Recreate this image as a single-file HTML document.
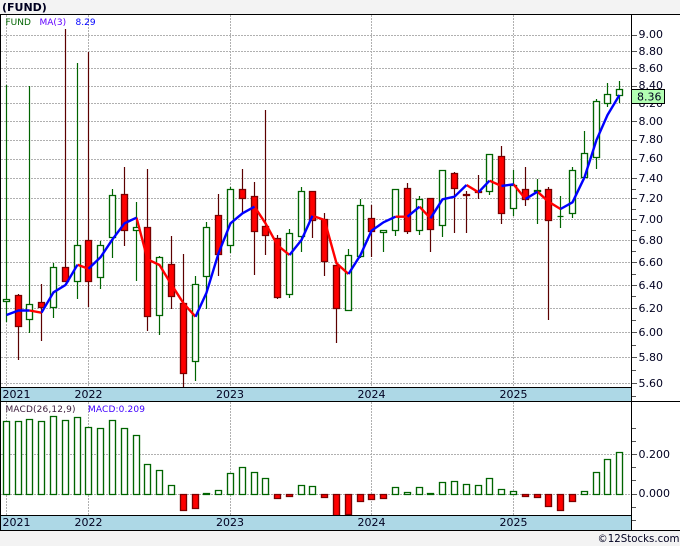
<!DOCTYPE html>
<html><head><meta charset="utf-8"><style>
html,body{margin:0;padding:0;background:#f3f3f3;width:680px;height:546px;overflow:hidden}
svg{display:block}
text{font-family:"DejaVu Sans",sans-serif;font-size:11px;fill:#000020}
.l{font-size:9px}
</style></head><body>
<svg width="680" height="546" viewBox="0 0 680 546" xmlns="http://www.w3.org/2000/svg">
<rect width="680" height="546" fill="#f3f3f3"/>
<rect x="0" y="14" width="680" height="516" fill="#fff"/>
<g shape-rendering="crispEdges">
<path fill="none" stroke="#b0b0b0" stroke-dasharray="2 1" d="M1 35.5H631M1 51.5H631M1 68.5H631M1 86.5H631M1 103.5H631M1 121.5H631M1 140.5H631M1 159.5H631M1 178.5H631M1 198.5H631M1 219.5H631M1 240.5H631M1 262.5H631M1 285.5H631M1 308.5H631M1 332.5H631M1 357.5H631M1 383.5H631M1 454.5H631M1 494.5H631M6.5 15V387M88.5 15V387M230.5 15V387M371.5 15V387M513.5 15V387M6.5 402V515M88.5 402V515M230.5 402V515M371.5 402V515M513.5 402V515"/>
</g>
<path fill="none" stroke="#006400" stroke-width="1.2" d="M6.5 85V322M29.5 86V333M53.5 263V318M77.5 63V299M100.5 241V289M112.5 189V258M136.5 202V281M159.5 256V335M195.5 276V381M206.5 222V309M230.5 187V253M289.5 229V298M301.5 187V252M348.5 249V311M360.5 199V258M383.5 230V252M395.5 189V236M419.5 196V235M442.5 170V237M489.5 154V195M513.5 170V216M537.5 179V224M560.5 196V228M572.5 167V218M584.5 131V177M596.5 99V169M607.5 83V107M619.5 81V103"/>
<path fill="none" stroke="#5c0000" stroke-width="1.2" d="M18.5 294V360M41.5 284V341M65.5 29V282M88.5 52V307M124.5 167V246M147.5 169V331M171.5 236V309M183.5 254V387M218.5 194V276M242.5 169V213M254.5 182V275M265.5 110V255M277.5 235V299M312.5 191V238M324.5 213V276M336.5 265V343M371.5 205V257M407.5 183V234M430.5 198V252M454.5 172V233M466.5 191V233M478.5 175V199M501.5 146V224M525.5 167V206M548.5 187V320"/>
<path fill="#fff" stroke="#006400" stroke-width="1.35" d="M3.5 299.5h6v2h-6zM26.5 304.5h6v15h-6zM50.5 267.5h6v40h-6zM74.5 245.5h6v36h-6zM97.5 245.5h6v32h-6zM109.5 195.5h6v42h-6zM133.5 227.5h6v3h-6zM156.5 257.5h6v58h-6zM192.5 284.5h6v77h-6zM203.5 227.5h6v49h-6zM227.5 189.5h6v56h-6zM286.5 233.5h6v61h-6zM298.5 191.5h6v45h-6zM345.5 255.5h6v55h-6zM357.5 205.5h6v51h-6zM380.5 230.5h6v2h-6zM392.5 189.5h6v41h-6zM416.5 199.5h6v31h-6zM439.5 170.5h6v55h-6zM486.5 154.5h6v37h-6zM510.5 185.5h6v23h-6zM534.5 190.5h6v1h-6zM557.5 216.5h6M569.5 170.5h6v43h-6zM581.5 153.5h6v24h-6zM593.5 101.5h6v56h-6zM604.5 94.5h6v9h-6zM616.5 89.5h6v6h-6z"/>
<path fill="#f00" stroke="#7a0000" stroke-width="1.35" d="M15.5 295.5h6v31h-6zM38.5 302.5h6v5h-6zM62.5 267.5h6v14h-6zM85.5 240.5h6v41h-6zM121.5 194.5h6v36h-6zM144.5 227.5h6v89h-6zM168.5 264.5h6v32h-6zM180.5 303.5h6v70h-6zM215.5 215.5h6v39h-6zM239.5 189.5h6v9h-6zM251.5 196.5h6v35h-6zM262.5 226.5h6v9h-6zM274.5 238.5h6v59h-6zM309.5 191.5h6v29h-6zM321.5 219.5h6v42h-6zM333.5 265.5h6v43h-6zM368.5 218.5h6v13h-6zM404.5 188.5h6v43h-6zM427.5 198.5h6v31h-6zM451.5 173.5h6v15h-6zM463.5 194.5h6v1h-6zM475.5 191.5h6v1h-6zM498.5 156.5h6v57h-6zM522.5 189.5h6v10h-6zM545.5 189.5h6v31h-6z"/>
<path fill="#fff" stroke="#006400" stroke-width="1.35" d="M3.5 421.5h6V494.5h-6zM15.5 421.5h6V494.5h-6zM26.5 419.5h6V494.5h-6zM38.5 421.5h6V494.5h-6zM50.5 416.5h6V494.5h-6zM62.5 420.5h6V494.5h-6zM74.5 417.5h6V494.5h-6zM85.5 427.5h6V494.5h-6zM97.5 428.5h6V494.5h-6zM109.5 420.5h6V494.5h-6zM121.5 428.5h6V494.5h-6zM133.5 435.5h6V494.5h-6zM144.5 464.5h6V494.5h-6zM156.5 470.5h6V494.5h-6zM168.5 485.5h6V494.5h-6zM203.5 493.5h6V494.5h-6zM215.5 490.5h6V494.5h-6zM227.5 473.5h6V494.5h-6zM239.5 467.5h6V494.5h-6zM251.5 472.5h6V494.5h-6zM262.5 478.5h6V494.5h-6zM298.5 485.5h6V494.5h-6zM309.5 486.5h6V494.5h-6zM392.5 487.5h6V494.5h-6zM404.5 492.5h6V494.5h-6zM416.5 487.5h6V494.5h-6zM427.5 493.5h6V494.5h-6zM439.5 482.5h6V494.5h-6zM451.5 481.5h6V494.5h-6zM463.5 484.5h6V494.5h-6zM475.5 485.5h6V494.5h-6zM486.5 478.5h6V494.5h-6zM498.5 489.5h6V494.5h-6zM510.5 491.5h6V494.5h-6zM581.5 491.5h6V494.5h-6zM593.5 472.5h6V494.5h-6zM604.5 459.5h6V494.5h-6zM616.5 452.5h6V494.5h-6z"/>
<path fill="#f00" stroke="#7a0000" stroke-width="1.35" d="M180.5 494.5h6V510.5h-6zM192.5 494.5h6V508.5h-6zM274.5 494.5h6V498.5h-6zM286.5 494.5h6V496.5h-6zM321.5 494.5h6V497.5h-6zM333.5 494.5h6V515.5h-6zM345.5 494.5h6V514.5h-6zM357.5 494.5h6V501.5h-6zM368.5 494.5h6V499.5h-6zM380.5 494.5h6V498.5h-6zM522.5 494.5h6V496.5h-6zM534.5 494.5h6V497.5h-6zM545.5 494.5h6V506.5h-6zM557.5 494.5h6V510.5h-6zM569.5 494.5h6V501.5h-6z"/>
<path fill="none" stroke="#f00" stroke-width="2.4" stroke-linejoin="round" d="M29.5 310.5L41.5 312.7M77.5 264.7L88.5 268.7M136.5 217.7L147.5 259.3L159.5 265L171.5 284.7L183.5 303.3L195.5 316.7M254.5 206.7L265.5 223.3L277.5 245.3L289.5 255M312.5 215.7L324.5 220L336.5 263.3L348.5 274M395.5 216.7L407.5 216.7M419.5 206.7L430.5 218.3M466.5 185L478.5 192.3M489.5 180.7L501.5 186M513.5 184.3L525.5 199M537.5 191.7L548.5 201.7L560.5 209"/>
<path fill="none" stroke="#00f" stroke-width="2.4" stroke-linejoin="round" d="M6.5 315L18.5 310.5L29.5 310.5M41.5 312.7L53.5 292.3L65.5 285L77.5 264.7M88.5 268.7L100.5 257.3L112.5 239.3L124.5 223.3L136.5 217.7M195.5 316.7L206.5 292.7L218.5 253.3L230.5 223.3L242.5 213.3L254.5 206.7M289.5 255L301.5 240L312.5 215.7M348.5 274L360.5 255L371.5 230.7L383.5 222.3L395.5 216.7M407.5 216.7L419.5 206.7M430.5 218.3L442.5 199.3L454.5 196.7L466.5 185M478.5 192.3L489.5 180.7M501.5 186L513.5 184.3M525.5 199L537.5 191.7M560.5 209L572.5 202.3L584.5 177.3L596.5 140L607.5 115L619.5 95"/>
<g shape-rendering="crispEdges">
<rect x="1" y="387" width="631" height="14" fill="#add8e6"/>
<rect x="1" y="515" width="631" height="15" fill="#add8e6"/>
<path fill="none" stroke="#000" d="M0 14.5H680M0 387.5H632M0 401.5H680M0 515.5H632M0 530.5H680M631.5 14V531M0.5 14V531"/>
<path fill="none" stroke="#555" d="M632 35.5h5M632 51.5h5M632 68.5h5M632 86.5h5M632 103.5h5M632 121.5h5M632 140.5h5M632 159.5h5M632 178.5h5M632 198.5h5M632 219.5h5M632 240.5h5M632 262.5h5M632 285.5h5M632 308.5h5M632 332.5h5M632 357.5h5M632 383.5h5M632 189.5h4M632 209.5h4M632 230.5h4M632 251.5h4M632 274.5h4M632 296.5h4M632 320.5h4M632 345.5h4M632 370.5h4M632 396.5h4M632 428.5h4M632 441.5h4M632 454.5h5M632 467.5h4M632 480.5h4M632 494.5h5M632 507.5h4M632 520.5h4"/>
</g>
<text x="2" y="11" style="font-weight:bold;font-size:11px;fill:#000020">(FUND)</text>
<text class="l" x="5.5" y="25" style="fill:#006400">FUND</text>
<text class="l" x="39.5" y="25" style="fill:#6000ff">MA(3)</text>
<text class="l" x="75.5" y="25" style="fill:#0000ff">8.29</text>
<text class="l" x="5.5" y="412" style="fill:#3a1a3a" textLength="70">MACD(26,12,9)</text>
<text class="l" x="88" y="412" style="fill:#4000ff" textLength="57">MACD:0.209</text>
<text x="638.5" y="38">9.00</text>
<text x="638.5" y="55">8.80</text>
<text x="638.5" y="72">8.60</text>
<text x="638.5" y="89">8.40</text>
<text x="638.5" y="107">8.20</text>
<text x="638.5" y="125">8.00</text>
<text x="638.5" y="143">7.80</text>
<text x="638.5" y="162">7.60</text>
<text x="638.5" y="182">7.40</text>
<text x="638.5" y="202">7.20</text>
<text x="638.5" y="223">7.00</text>
<text x="638.5" y="244">6.80</text>
<text x="638.5" y="266">6.60</text>
<text x="638.5" y="289">6.40</text>
<text x="638.5" y="312">6.20</text>
<text x="638.5" y="336">6.00</text>
<text x="638.5" y="361">5.80</text>
<text x="638.5" y="387">5.60</text>
<text x="638.5" y="458">0.200</text>
<text x="638.5" y="497">0.000</text>
<rect x="631.5" y="89.5" width="33" height="14" fill="#b3ffb3" stroke="#000" shape-rendering="crispEdges"/>
<text x="637" y="100.5">8.36</text>
<text x="2.5" y="398">2021</text>
<text x="74.5" y="398">2022</text>
<text x="216" y="398">2023</text>
<text x="357.5" y="398">2024</text>
<text x="499.5" y="398">2025</text>
<text x="2.5" y="526">2021</text>
<text x="74.5" y="526">2022</text>
<text x="216" y="526">2023</text>
<text x="357.5" y="526">2024</text>
<text x="499.5" y="526">2025</text>
<text x="597.5" y="542" style="font-size:11px" textLength="82" lengthAdjust="spacingAndGlyphs">©12Stocks.com</text>
</svg>
</body></html>
